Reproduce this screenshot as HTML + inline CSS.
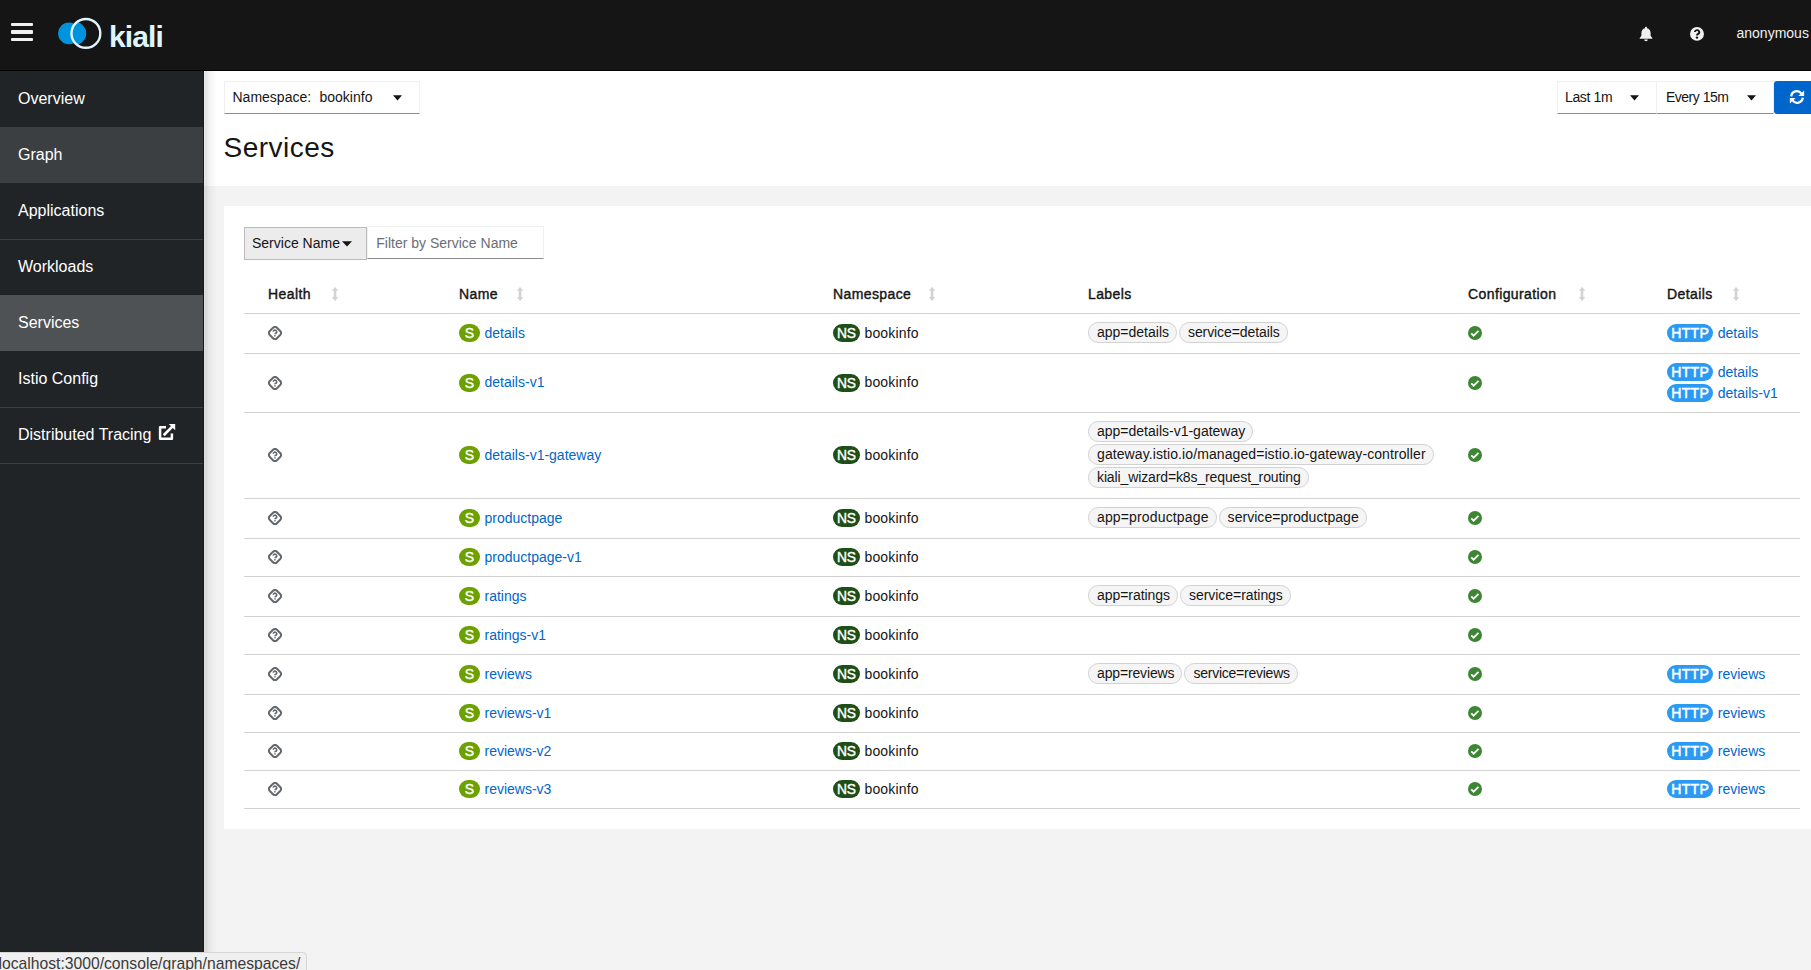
<!DOCTYPE html><html><head><meta charset="utf-8"><style>
*{margin:0;padding:0;box-sizing:border-box}
html,body{width:1811px;height:970px;overflow:hidden;background:#f3f3f3;font-family:"Liberation Sans", sans-serif;}
.a{position:absolute;white-space:nowrap}
</style></head><body><div class="a" style="left:0;top:0;width:1811px;height:70px;background:#151515"></div>
<div class="a" style="left:0;top:70px;width:1811px;height:1px;background:#030303"></div>
<div class="a" style="left:11px;top:22.8px;width:22px;height:3.4px;background:#f0f0f0;border-radius:1px"></div>
<div class="a" style="left:11px;top:30.3px;width:22px;height:3.4px;background:#f0f0f0;border-radius:1px"></div>
<div class="a" style="left:11px;top:37.8px;width:22px;height:3.4px;background:#f0f0f0;border-radius:1px"></div>
<svg class="a" style="left:50px;top:12px" width="60" height="44" viewBox="50 12 60 44">
<defs><clipPath id="ring"><circle cx="85.9" cy="33.4" r="14.3"/></clipPath></defs>
<circle cx="69" cy="33.4" r="10.9" fill="#0093dd"/>
<ellipse cx="72" cy="33.4" rx="14.2" ry="12.5" fill="#0093dd" clip-path="url(#ring)"/>
<circle cx="85.9" cy="33.4" r="14.4" fill="none" stroke="#dff6fc" stroke-width="2.4"/>
</svg>
<div class="a" style="left:109px;top:20.04px;font-size:30px;line-height:34.50px;color:#dff6fc;font-weight:bold;letter-spacing:-0.9px">kiali</div>
<svg class="a" style="left:1639px;top:26px" width="14" height="16" viewBox="0 0 14 16">
<path d="M7 0.8c0.6 0 1 0.4 1 0.9v0.5c2.3 0.5 3.6 2.4 3.6 4.8v2.8l1.7 2.1v0.9H0.7v-0.9l1.7-2.1V7c0-2.4 1.3-4.3 3.6-4.8V1.7c0-0.5 0.4-0.9 1-0.9z M5.2 13.6h3.6c0 1-0.8 1.6-1.8 1.6s-1.8-0.6-1.8-1.6z" fill="#f0f0f0"/>
</svg>
<svg class="a" style="left:1689px;top:26px" width="16" height="16" viewBox="0 0 16 16">
<circle cx="8" cy="7.9" r="6.95" fill="#f0f0f0"/>
<path d="M5.9 6.1A2.2 2.0 0 1 1 9.1 7.9Q8 8.6 8 9.6" fill="none" stroke="#151515" stroke-width="1.9"/>
<circle cx="8" cy="11.6" r="1.2" fill="#151515"/>
</svg>
<div class="a" style="left:1736.5px;top:25.12px;font-size:14px;line-height:16.10px;color:#f0f0f0;font-weight:normal;">anonymous</div>
<div class="a" style="left:0;top:71px;width:204px;height:899px;background:#212427"></div>
<div class="a" style="left:18px;top:89.51px;font-size:16px;line-height:18.40px;color:#ffffff;font-weight:normal;">Overview</div>
<div class="a" style="left:0;top:127px;width:203px;height:56px;background:#3c3f42"></div>
<div class="a" style="left:18px;top:145.51px;font-size:16px;line-height:18.40px;color:#ffffff;font-weight:normal;">Graph</div>
<div class="a" style="left:18px;top:201.51px;font-size:16px;line-height:18.40px;color:#ffffff;font-weight:normal;">Applications</div>
<div class="a" style="left:18px;top:257.51px;font-size:16px;line-height:18.40px;color:#ffffff;font-weight:normal;">Workloads</div>
<div class="a" style="left:0;top:295px;width:203px;height:56px;background:#4f5255"></div>
<div class="a" style="left:18px;top:313.51px;font-size:16px;line-height:18.40px;color:#ffffff;font-weight:normal;">Services</div>
<div class="a" style="left:18px;top:369.51px;font-size:16px;line-height:18.40px;color:#ffffff;font-weight:normal;">Istio Config</div>
<div class="a" style="left:18px;top:425.51px;font-size:16px;line-height:18.40px;color:#ffffff;font-weight:normal;">Distributed Tracing</div>
<div class="a" style="left:0;top:239px;width:203px;height:1px;background:#3c3f42"></div>
<div class="a" style="left:0;top:407px;width:203px;height:1px;background:#3c3f42"></div>
<div class="a" style="left:0;top:463px;width:203px;height:1px;background:#3c3f42"></div>
<div class="a" style="left:203px;top:71px;width:1px;height:899px;background:#17191c"></div>
<svg class="a" style="left:150px;top:415px" width="35" height="33" viewBox="0 0 35 33">
<path d="M16 12.15H10.1V23.8H21.9V18.5" fill="none" stroke="#fff" stroke-width="2.5" stroke-linejoin="round"/>
<path d="M18.8 9H25.2V15.3z" fill="#fff"/>
<path d="M13.7 20.2L22.3 11.6" stroke="#fff" stroke-width="2.7"/>
</svg>
<div class="a" style="left:204px;top:71px;width:1607px;height:115px;background:#fff"></div>
<div class="a" style="left:204px;top:71px;width:14px;height:899px;background:linear-gradient(to right,rgba(0,0,0,.07) 0px,rgba(0,0,0,.11) 1.5px,rgba(0,0,0,.09) 3px,rgba(0,0,0,.05) 5px,rgba(0,0,0,.02) 9px,rgba(0,0,0,0) 13px)"></div>
<div class="a" style="left:224px;top:81px;width:196px;height:33px;background:#fff;border:1px solid #f0f0f0;border-bottom-color:#8a8d90"></div><svg class="a" style="left:392.5px;top:95px" width="9" height="6" viewBox="0 0 9 6"><path d="M0 0.3h9L4.5 5.6z" fill="#151515"/></svg>
<div class="a" style="left:232.5px;top:89.12px;font-size:14px;line-height:16.10px;color:#151515;font-weight:normal;">Namespace:</div>
<div class="a" style="left:319.5px;top:89.12px;font-size:14px;line-height:16.10px;color:#151515;font-weight:normal;">bookinfo</div>
<div class="a" style="left:1557px;top:81px;width:100px;height:33px;background:#fff;border:1px solid #f0f0f0;border-bottom-color:#8a8d90"></div><svg class="a" style="left:1630px;top:95px" width="9" height="6" viewBox="0 0 9 6"><path d="M0 0.3h9L4.5 5.6z" fill="#151515"/></svg>
<div class="a" style="left:1565px;top:89.12px;font-size:14px;line-height:16.10px;color:#151515;font-weight:normal;letter-spacing:-0.35px">Last 1m</div>
<div class="a" style="left:1656px;top:81px;width:118px;height:33px;background:#fff;border:1px solid #f0f0f0;border-bottom-color:#8a8d90"></div><svg class="a" style="left:1746.5px;top:95px" width="9" height="6" viewBox="0 0 9 6"><path d="M0 0.3h9L4.5 5.6z" fill="#151515"/></svg>
<div class="a" style="left:1666px;top:89.12px;font-size:14px;line-height:16.10px;color:#151515;font-weight:normal;letter-spacing:-0.5px">Every 15m</div>
<div class="a" style="left:1774px;top:81px;width:50px;height:33px;background:#0066cc;border-radius:3px"></div>
<svg class="a" style="left:1780px;top:82px" width="31" height="30" viewBox="0 0 31 30">
<path d="M11.2 14.3A5.65 5.65 0 0 1 21.4 11.6" fill="none" stroke="#fff" stroke-width="2.3"/>
<path d="M18.4 13.9H24.1V8.6z" fill="#fff"/>
<path d="M22.8 15.7A5.65 5.65 0 0 1 12.6 18.4" fill="none" stroke="#fff" stroke-width="2.3"/>
<path d="M9.9 16.1H15.6L9.9 21.4z" fill="#fff"/>
</svg>
<div class="a" style="left:223.5px;top:131.95px;font-size:28px;line-height:32.20px;color:#151515;font-weight:normal;letter-spacing:0.5px">Services</div>
<div class="a" style="left:224px;top:206px;width:1600px;height:623px;background:#fff"></div>
<div class="a" style="left:244px;top:227px;width:123px;height:33px;background:#ececec;border:1px solid #bababa"></div>
<div class="a" style="left:252px;top:235.32px;font-size:14px;line-height:16.10px;color:#151515;font-weight:normal;">Service Name</div>
<svg class="a" style="left:341.5px;top:241px" width="10" height="6" viewBox="0 0 10 6"><path d="M0 0.3h10L5 5.6z" fill="#151515"/></svg>
<div class="a" style="left:367px;top:226px;width:177px;height:33px;background:#fff;border:1px solid #f0f0f0;border-bottom-color:#8a8d90"></div>
<div class="a" style="left:376.3px;top:235.32px;font-size:14px;line-height:16.10px;color:#6a6e73;font-weight:normal;">Filter by Service Name</div>
<div class="a" style="left:268px;top:286.12px;font-size:14px;line-height:16.10px;color:#151515;font-weight:normal;-webkit-text-stroke:0.4px #151515;letter-spacing:0.4px">Health</div>
<svg class="a" style="left:331.9px;top:286px" width="8" height="16" viewBox="0 0 8 16"><path d="M3.05 1.2L5.8 4.5H4.05V11.3H5.8L3.05 14.8 0.3 11.3H2.05V4.5H0.3z" fill="#d2d2d2" stroke="#d2d2d2" stroke-width="0.5" stroke-linejoin="round"/></svg>
<div class="a" style="left:459px;top:286.12px;font-size:14px;line-height:16.10px;color:#151515;font-weight:normal;-webkit-text-stroke:0.4px #151515;letter-spacing:0.4px">Name</div>
<svg class="a" style="left:517.1px;top:286px" width="8" height="16" viewBox="0 0 8 16"><path d="M3.05 1.2L5.8 4.5H4.05V11.3H5.8L3.05 14.8 0.3 11.3H2.05V4.5H0.3z" fill="#d2d2d2" stroke="#d2d2d2" stroke-width="0.5" stroke-linejoin="round"/></svg>
<div class="a" style="left:833px;top:286.12px;font-size:14px;line-height:16.10px;color:#151515;font-weight:normal;-webkit-text-stroke:0.4px #151515;letter-spacing:0.4px">Namespace</div>
<svg class="a" style="left:929.1px;top:286px" width="8" height="16" viewBox="0 0 8 16"><path d="M3.05 1.2L5.8 4.5H4.05V11.3H5.8L3.05 14.8 0.3 11.3H2.05V4.5H0.3z" fill="#d2d2d2" stroke="#d2d2d2" stroke-width="0.5" stroke-linejoin="round"/></svg>
<div class="a" style="left:1088px;top:286.12px;font-size:14px;line-height:16.10px;color:#151515;font-weight:normal;-webkit-text-stroke:0.4px #151515;letter-spacing:0.4px">Labels</div>
<div class="a" style="left:1468px;top:286.12px;font-size:14px;line-height:16.10px;color:#151515;font-weight:normal;-webkit-text-stroke:0.4px #151515;letter-spacing:0.4px">Configuration</div>
<svg class="a" style="left:1579.1000000000001px;top:286px" width="8" height="16" viewBox="0 0 8 16"><path d="M3.05 1.2L5.8 4.5H4.05V11.3H5.8L3.05 14.8 0.3 11.3H2.05V4.5H0.3z" fill="#d2d2d2" stroke="#d2d2d2" stroke-width="0.5" stroke-linejoin="round"/></svg>
<div class="a" style="left:1667px;top:286.12px;font-size:14px;line-height:16.10px;color:#151515;font-weight:normal;-webkit-text-stroke:0.4px #151515;letter-spacing:0.4px">Details</div>
<svg class="a" style="left:1733.1000000000001px;top:286px" width="8" height="16" viewBox="0 0 8 16"><path d="M3.05 1.2L5.8 4.5H4.05V11.3H5.8L3.05 14.8 0.3 11.3H2.05V4.5H0.3z" fill="#d2d2d2" stroke="#d2d2d2" stroke-width="0.5" stroke-linejoin="round"/></svg>
<div class="a" style="left:244px;top:313px;width:1556px;height:1px;background:#d2d2d2"></div>
<div class="a" style="left:244px;top:353px;width:1556px;height:1px;background:#d2d2d2"></div>
<svg class="a" style="left:268px;top:326.0px" width="14" height="14" viewBox="0 0 14 14">
<rect x="1.94" y="1.94" width="10.12" height="10.12" rx="2.8" transform="rotate(45 7 7)" fill="none" stroke="#64686d" stroke-width="2"/>
<path d="M5.3 5.8A1.7 1.7 0 1 1 8.3 6.9L7.5 7.5Q7 7.9 7 8.2" fill="none" stroke="#64686d" stroke-width="1.65"/>
<circle cx="7" cy="9.75" r="0.85" fill="#64686d"/>
</svg>
<div class="a" style="left:459px;top:324.0px;width:21px;height:18px;border-radius:9px;background:#6ca100;color:#fff;font-size:14px;font-weight:normal;-webkit-text-stroke:0.35px #fff;line-height:18.6px;text-align:center">S</div>
<div class="a" style="left:484.5px;top:324.92px;font-size:14px;line-height:16.10px;color:#0066cc;font-weight:normal;">details</div>
<div class="a" style="left:833px;top:324.0px;width:27px;height:18px;border-radius:9px;background:#1e4f18;color:#fff;font-size:13.8px;font-weight:normal;-webkit-text-stroke:0.4px #fff;line-height:19.2px;letter-spacing:-0.4px;text-indent:-0.4px;text-align:center">NS</div>
<div class="a" style="left:864.5px;top:324.92px;font-size:14px;line-height:16.10px;color:#151515;font-weight:normal;letter-spacing:0.15px">bookinfo</div>
<div class="a" style="left:1088px;top:322.4px;display:flex;gap:2px"><div style="height:20.6px;padding:0 7px 0 8px;border:1px solid #d2d2d2;border-radius:10.3px;background:#f5f5f5;font-size:14px;line-height:18.6px;color:#151515;white-space:nowrap;letter-spacing:0px">app=details</div><div style="height:20.6px;padding:0 7px 0 8px;border:1px solid #d2d2d2;border-radius:10.3px;background:#f5f5f5;font-size:14px;line-height:18.6px;color:#151515;white-space:nowrap;letter-spacing:-0.09px">service=details</div></div>
<svg class="a" style="left:1468px;top:326.0px" width="14" height="14" viewBox="0 0 14 14">
<circle cx="7" cy="7" r="7" fill="#3e8635"/>
<path d="M3.3 7.4L5.6 9.7L10.5 4.8" fill="none" stroke="#fff" stroke-width="1.75"/>
</svg>
<div class="a" style="left:1667px;top:323.7px;width:46px;height:18px;border-radius:9px;background:#2b9af3;color:#fff;font-size:14px;font-weight:normal;-webkit-text-stroke:0.5px #fff;line-height:18px;text-align:center;letter-spacing:0.3px;text-indent:0.3px">HTTP</div>
<div class="a" style="left:1717.8px;top:324.62px;font-size:14px;line-height:16.10px;color:#0066cc;font-weight:normal;">details</div>
<div class="a" style="left:244px;top:412px;width:1556px;height:1px;background:#d2d2d2"></div>
<svg class="a" style="left:268px;top:375.5px" width="14" height="14" viewBox="0 0 14 14">
<rect x="1.94" y="1.94" width="10.12" height="10.12" rx="2.8" transform="rotate(45 7 7)" fill="none" stroke="#64686d" stroke-width="2"/>
<path d="M5.3 5.8A1.7 1.7 0 1 1 8.3 6.9L7.5 7.5Q7 7.9 7 8.2" fill="none" stroke="#64686d" stroke-width="1.65"/>
<circle cx="7" cy="9.75" r="0.85" fill="#64686d"/>
</svg>
<div class="a" style="left:459px;top:373.5px;width:21px;height:18px;border-radius:9px;background:#6ca100;color:#fff;font-size:14px;font-weight:normal;-webkit-text-stroke:0.35px #fff;line-height:18.6px;text-align:center">S</div>
<div class="a" style="left:484.5px;top:374.42px;font-size:14px;line-height:16.10px;color:#0066cc;font-weight:normal;">details-v1</div>
<div class="a" style="left:833px;top:373.5px;width:27px;height:18px;border-radius:9px;background:#1e4f18;color:#fff;font-size:13.8px;font-weight:normal;-webkit-text-stroke:0.4px #fff;line-height:19.2px;letter-spacing:-0.4px;text-indent:-0.4px;text-align:center">NS</div>
<div class="a" style="left:864.5px;top:374.42px;font-size:14px;line-height:16.10px;color:#151515;font-weight:normal;letter-spacing:0.15px">bookinfo</div>
<svg class="a" style="left:1468px;top:375.5px" width="14" height="14" viewBox="0 0 14 14">
<circle cx="7" cy="7" r="7" fill="#3e8635"/>
<path d="M3.3 7.4L5.6 9.7L10.5 4.8" fill="none" stroke="#fff" stroke-width="1.75"/>
</svg>
<div class="a" style="left:1667px;top:362.7px;width:46px;height:18px;border-radius:9px;background:#2b9af3;color:#fff;font-size:14px;font-weight:normal;-webkit-text-stroke:0.5px #fff;line-height:18px;text-align:center;letter-spacing:0.3px;text-indent:0.3px">HTTP</div>
<div class="a" style="left:1717.8px;top:363.62px;font-size:14px;line-height:16.10px;color:#0066cc;font-weight:normal;">details</div>
<div class="a" style="left:1667px;top:383.7px;width:46px;height:18px;border-radius:9px;background:#2b9af3;color:#fff;font-size:14px;font-weight:normal;-webkit-text-stroke:0.5px #fff;line-height:18px;text-align:center;letter-spacing:0.3px;text-indent:0.3px">HTTP</div>
<div class="a" style="left:1717.8px;top:384.62px;font-size:14px;line-height:16.10px;color:#0066cc;font-weight:normal;">details-v1</div>
<div class="a" style="left:244px;top:498px;width:1556px;height:1px;background:#d2d2d2"></div>
<svg class="a" style="left:268px;top:448.0px" width="14" height="14" viewBox="0 0 14 14">
<rect x="1.94" y="1.94" width="10.12" height="10.12" rx="2.8" transform="rotate(45 7 7)" fill="none" stroke="#64686d" stroke-width="2"/>
<path d="M5.3 5.8A1.7 1.7 0 1 1 8.3 6.9L7.5 7.5Q7 7.9 7 8.2" fill="none" stroke="#64686d" stroke-width="1.65"/>
<circle cx="7" cy="9.75" r="0.85" fill="#64686d"/>
</svg>
<div class="a" style="left:459px;top:446.0px;width:21px;height:18px;border-radius:9px;background:#6ca100;color:#fff;font-size:14px;font-weight:normal;-webkit-text-stroke:0.35px #fff;line-height:18.6px;text-align:center">S</div>
<div class="a" style="left:484.5px;top:446.92px;font-size:14px;line-height:16.10px;color:#0066cc;font-weight:normal;">details-v1-gateway</div>
<div class="a" style="left:833px;top:446.0px;width:27px;height:18px;border-radius:9px;background:#1e4f18;color:#fff;font-size:13.8px;font-weight:normal;-webkit-text-stroke:0.4px #fff;line-height:19.2px;letter-spacing:-0.4px;text-indent:-0.4px;text-align:center">NS</div>
<div class="a" style="left:864.5px;top:446.92px;font-size:14px;line-height:16.10px;color:#151515;font-weight:normal;letter-spacing:0.15px">bookinfo</div>
<div class="a" style="left:1088px;top:421.4px;height:20.6px;padding:0 7px 0 8px;border:1px solid #d2d2d2;border-radius:10.3px;background:#f5f5f5;font-size:14px;line-height:18.6px;color:#151515;letter-spacing:0px">app=details-v1-gateway</div>
<div class="a" style="left:1088px;top:444.4px;height:20.6px;padding:0 7px 0 8px;border:1px solid #d2d2d2;border-radius:10.3px;background:#f5f5f5;font-size:14px;line-height:18.6px;color:#151515;letter-spacing:0.092px">gateway.istio.io/managed=istio.io-gateway-controller</div>
<div class="a" style="left:1088px;top:467.4px;height:20.6px;padding:0 7px 0 8px;border:1px solid #d2d2d2;border-radius:10.3px;background:#f5f5f5;font-size:14px;line-height:18.6px;color:#151515;letter-spacing:-0.12px">kiali_wizard=k8s_request_routing</div>
<svg class="a" style="left:1468px;top:448.0px" width="14" height="14" viewBox="0 0 14 14">
<circle cx="7" cy="7" r="7" fill="#3e8635"/>
<path d="M3.3 7.4L5.6 9.7L10.5 4.8" fill="none" stroke="#fff" stroke-width="1.75"/>
</svg>
<div class="a" style="left:244px;top:538px;width:1556px;height:1px;background:#d2d2d2"></div>
<svg class="a" style="left:268px;top:511.0px" width="14" height="14" viewBox="0 0 14 14">
<rect x="1.94" y="1.94" width="10.12" height="10.12" rx="2.8" transform="rotate(45 7 7)" fill="none" stroke="#64686d" stroke-width="2"/>
<path d="M5.3 5.8A1.7 1.7 0 1 1 8.3 6.9L7.5 7.5Q7 7.9 7 8.2" fill="none" stroke="#64686d" stroke-width="1.65"/>
<circle cx="7" cy="9.75" r="0.85" fill="#64686d"/>
</svg>
<div class="a" style="left:459px;top:509.0px;width:21px;height:18px;border-radius:9px;background:#6ca100;color:#fff;font-size:14px;font-weight:normal;-webkit-text-stroke:0.35px #fff;line-height:18.6px;text-align:center">S</div>
<div class="a" style="left:484.5px;top:509.92px;font-size:14px;line-height:16.10px;color:#0066cc;font-weight:normal;">productpage</div>
<div class="a" style="left:833px;top:509.0px;width:27px;height:18px;border-radius:9px;background:#1e4f18;color:#fff;font-size:13.8px;font-weight:normal;-webkit-text-stroke:0.4px #fff;line-height:19.2px;letter-spacing:-0.4px;text-indent:-0.4px;text-align:center">NS</div>
<div class="a" style="left:864.5px;top:509.92px;font-size:14px;line-height:16.10px;color:#151515;font-weight:normal;letter-spacing:0.15px">bookinfo</div>
<div class="a" style="left:1088px;top:507.4px;display:flex;gap:2px"><div style="height:20.6px;padding:0 7px 0 8px;border:1px solid #d2d2d2;border-radius:10.3px;background:#f5f5f5;font-size:14px;line-height:18.6px;color:#151515;white-space:nowrap;letter-spacing:0.147px">app=productpage</div><div style="height:20.6px;padding:0 7px 0 8px;border:1px solid #d2d2d2;border-radius:10.3px;background:#f5f5f5;font-size:14px;line-height:18.6px;color:#151515;white-space:nowrap;letter-spacing:0.04px">service=productpage</div></div>
<svg class="a" style="left:1468px;top:511.0px" width="14" height="14" viewBox="0 0 14 14">
<circle cx="7" cy="7" r="7" fill="#3e8635"/>
<path d="M3.3 7.4L5.6 9.7L10.5 4.8" fill="none" stroke="#fff" stroke-width="1.75"/>
</svg>
<div class="a" style="left:244px;top:576px;width:1556px;height:1px;background:#d2d2d2"></div>
<svg class="a" style="left:268px;top:550.0px" width="14" height="14" viewBox="0 0 14 14">
<rect x="1.94" y="1.94" width="10.12" height="10.12" rx="2.8" transform="rotate(45 7 7)" fill="none" stroke="#64686d" stroke-width="2"/>
<path d="M5.3 5.8A1.7 1.7 0 1 1 8.3 6.9L7.5 7.5Q7 7.9 7 8.2" fill="none" stroke="#64686d" stroke-width="1.65"/>
<circle cx="7" cy="9.75" r="0.85" fill="#64686d"/>
</svg>
<div class="a" style="left:459px;top:548.0px;width:21px;height:18px;border-radius:9px;background:#6ca100;color:#fff;font-size:14px;font-weight:normal;-webkit-text-stroke:0.35px #fff;line-height:18.6px;text-align:center">S</div>
<div class="a" style="left:484.5px;top:548.92px;font-size:14px;line-height:16.10px;color:#0066cc;font-weight:normal;">productpage-v1</div>
<div class="a" style="left:833px;top:548.0px;width:27px;height:18px;border-radius:9px;background:#1e4f18;color:#fff;font-size:13.8px;font-weight:normal;-webkit-text-stroke:0.4px #fff;line-height:19.2px;letter-spacing:-0.4px;text-indent:-0.4px;text-align:center">NS</div>
<div class="a" style="left:864.5px;top:548.92px;font-size:14px;line-height:16.10px;color:#151515;font-weight:normal;letter-spacing:0.15px">bookinfo</div>
<svg class="a" style="left:1468px;top:550.0px" width="14" height="14" viewBox="0 0 14 14">
<circle cx="7" cy="7" r="7" fill="#3e8635"/>
<path d="M3.3 7.4L5.6 9.7L10.5 4.8" fill="none" stroke="#fff" stroke-width="1.75"/>
</svg>
<div class="a" style="left:244px;top:616px;width:1556px;height:1px;background:#d2d2d2"></div>
<svg class="a" style="left:268px;top:589.0px" width="14" height="14" viewBox="0 0 14 14">
<rect x="1.94" y="1.94" width="10.12" height="10.12" rx="2.8" transform="rotate(45 7 7)" fill="none" stroke="#64686d" stroke-width="2"/>
<path d="M5.3 5.8A1.7 1.7 0 1 1 8.3 6.9L7.5 7.5Q7 7.9 7 8.2" fill="none" stroke="#64686d" stroke-width="1.65"/>
<circle cx="7" cy="9.75" r="0.85" fill="#64686d"/>
</svg>
<div class="a" style="left:459px;top:587.0px;width:21px;height:18px;border-radius:9px;background:#6ca100;color:#fff;font-size:14px;font-weight:normal;-webkit-text-stroke:0.35px #fff;line-height:18.6px;text-align:center">S</div>
<div class="a" style="left:484.5px;top:587.92px;font-size:14px;line-height:16.10px;color:#0066cc;font-weight:normal;">ratings</div>
<div class="a" style="left:833px;top:587.0px;width:27px;height:18px;border-radius:9px;background:#1e4f18;color:#fff;font-size:13.8px;font-weight:normal;-webkit-text-stroke:0.4px #fff;line-height:19.2px;letter-spacing:-0.4px;text-indent:-0.4px;text-align:center">NS</div>
<div class="a" style="left:864.5px;top:587.92px;font-size:14px;line-height:16.10px;color:#151515;font-weight:normal;letter-spacing:0.15px">bookinfo</div>
<div class="a" style="left:1088px;top:585.4px;display:flex;gap:2px"><div style="height:20.6px;padding:0 7px 0 8px;border:1px solid #d2d2d2;border-radius:10.3px;background:#f5f5f5;font-size:14px;line-height:18.6px;color:#151515;white-space:nowrap;letter-spacing:-0.05px">app=ratings</div><div style="height:20.6px;padding:0 7px 0 8px;border:1px solid #d2d2d2;border-radius:10.3px;background:#f5f5f5;font-size:14px;line-height:18.6px;color:#151515;white-space:nowrap;letter-spacing:-0.05px">service=ratings</div></div>
<svg class="a" style="left:1468px;top:589.0px" width="14" height="14" viewBox="0 0 14 14">
<circle cx="7" cy="7" r="7" fill="#3e8635"/>
<path d="M3.3 7.4L5.6 9.7L10.5 4.8" fill="none" stroke="#fff" stroke-width="1.75"/>
</svg>
<div class="a" style="left:244px;top:654px;width:1556px;height:1px;background:#d2d2d2"></div>
<svg class="a" style="left:268px;top:628.0px" width="14" height="14" viewBox="0 0 14 14">
<rect x="1.94" y="1.94" width="10.12" height="10.12" rx="2.8" transform="rotate(45 7 7)" fill="none" stroke="#64686d" stroke-width="2"/>
<path d="M5.3 5.8A1.7 1.7 0 1 1 8.3 6.9L7.5 7.5Q7 7.9 7 8.2" fill="none" stroke="#64686d" stroke-width="1.65"/>
<circle cx="7" cy="9.75" r="0.85" fill="#64686d"/>
</svg>
<div class="a" style="left:459px;top:626.0px;width:21px;height:18px;border-radius:9px;background:#6ca100;color:#fff;font-size:14px;font-weight:normal;-webkit-text-stroke:0.35px #fff;line-height:18.6px;text-align:center">S</div>
<div class="a" style="left:484.5px;top:626.92px;font-size:14px;line-height:16.10px;color:#0066cc;font-weight:normal;">ratings-v1</div>
<div class="a" style="left:833px;top:626.0px;width:27px;height:18px;border-radius:9px;background:#1e4f18;color:#fff;font-size:13.8px;font-weight:normal;-webkit-text-stroke:0.4px #fff;line-height:19.2px;letter-spacing:-0.4px;text-indent:-0.4px;text-align:center">NS</div>
<div class="a" style="left:864.5px;top:626.92px;font-size:14px;line-height:16.10px;color:#151515;font-weight:normal;letter-spacing:0.15px">bookinfo</div>
<svg class="a" style="left:1468px;top:628.0px" width="14" height="14" viewBox="0 0 14 14">
<circle cx="7" cy="7" r="7" fill="#3e8635"/>
<path d="M3.3 7.4L5.6 9.7L10.5 4.8" fill="none" stroke="#fff" stroke-width="1.75"/>
</svg>
<div class="a" style="left:244px;top:694px;width:1556px;height:1px;background:#d2d2d2"></div>
<svg class="a" style="left:268px;top:667.0px" width="14" height="14" viewBox="0 0 14 14">
<rect x="1.94" y="1.94" width="10.12" height="10.12" rx="2.8" transform="rotate(45 7 7)" fill="none" stroke="#64686d" stroke-width="2"/>
<path d="M5.3 5.8A1.7 1.7 0 1 1 8.3 6.9L7.5 7.5Q7 7.9 7 8.2" fill="none" stroke="#64686d" stroke-width="1.65"/>
<circle cx="7" cy="9.75" r="0.85" fill="#64686d"/>
</svg>
<div class="a" style="left:459px;top:665.0px;width:21px;height:18px;border-radius:9px;background:#6ca100;color:#fff;font-size:14px;font-weight:normal;-webkit-text-stroke:0.35px #fff;line-height:18.6px;text-align:center">S</div>
<div class="a" style="left:484.5px;top:665.92px;font-size:14px;line-height:16.10px;color:#0066cc;font-weight:normal;">reviews</div>
<div class="a" style="left:833px;top:665.0px;width:27px;height:18px;border-radius:9px;background:#1e4f18;color:#fff;font-size:13.8px;font-weight:normal;-webkit-text-stroke:0.4px #fff;line-height:19.2px;letter-spacing:-0.4px;text-indent:-0.4px;text-align:center">NS</div>
<div class="a" style="left:864.5px;top:665.92px;font-size:14px;line-height:16.10px;color:#151515;font-weight:normal;letter-spacing:0.15px">bookinfo</div>
<div class="a" style="left:1088px;top:663.4px;display:flex;gap:2px"><div style="height:20.6px;padding:0 7px 0 8px;border:1px solid #d2d2d2;border-radius:10.3px;background:#f5f5f5;font-size:14px;line-height:18.6px;color:#151515;white-space:nowrap;letter-spacing:-0.145px">app=reviews</div><div style="height:20.6px;padding:0 7px 0 8px;border:1px solid #d2d2d2;border-radius:10.3px;background:#f5f5f5;font-size:14px;line-height:18.6px;color:#151515;white-space:nowrap;letter-spacing:-0.24px">service=reviews</div></div>
<svg class="a" style="left:1468px;top:667.0px" width="14" height="14" viewBox="0 0 14 14">
<circle cx="7" cy="7" r="7" fill="#3e8635"/>
<path d="M3.3 7.4L5.6 9.7L10.5 4.8" fill="none" stroke="#fff" stroke-width="1.75"/>
</svg>
<div class="a" style="left:1667px;top:664.7px;width:46px;height:18px;border-radius:9px;background:#2b9af3;color:#fff;font-size:14px;font-weight:normal;-webkit-text-stroke:0.5px #fff;line-height:18px;text-align:center;letter-spacing:0.3px;text-indent:0.3px">HTTP</div>
<div class="a" style="left:1717.8px;top:665.62px;font-size:14px;line-height:16.10px;color:#0066cc;font-weight:normal;">reviews</div>
<div class="a" style="left:244px;top:732px;width:1556px;height:1px;background:#d2d2d2"></div>
<svg class="a" style="left:268px;top:706.0px" width="14" height="14" viewBox="0 0 14 14">
<rect x="1.94" y="1.94" width="10.12" height="10.12" rx="2.8" transform="rotate(45 7 7)" fill="none" stroke="#64686d" stroke-width="2"/>
<path d="M5.3 5.8A1.7 1.7 0 1 1 8.3 6.9L7.5 7.5Q7 7.9 7 8.2" fill="none" stroke="#64686d" stroke-width="1.65"/>
<circle cx="7" cy="9.75" r="0.85" fill="#64686d"/>
</svg>
<div class="a" style="left:459px;top:704.0px;width:21px;height:18px;border-radius:9px;background:#6ca100;color:#fff;font-size:14px;font-weight:normal;-webkit-text-stroke:0.35px #fff;line-height:18.6px;text-align:center">S</div>
<div class="a" style="left:484.5px;top:704.92px;font-size:14px;line-height:16.10px;color:#0066cc;font-weight:normal;">reviews-v1</div>
<div class="a" style="left:833px;top:704.0px;width:27px;height:18px;border-radius:9px;background:#1e4f18;color:#fff;font-size:13.8px;font-weight:normal;-webkit-text-stroke:0.4px #fff;line-height:19.2px;letter-spacing:-0.4px;text-indent:-0.4px;text-align:center">NS</div>
<div class="a" style="left:864.5px;top:704.92px;font-size:14px;line-height:16.10px;color:#151515;font-weight:normal;letter-spacing:0.15px">bookinfo</div>
<svg class="a" style="left:1468px;top:706.0px" width="14" height="14" viewBox="0 0 14 14">
<circle cx="7" cy="7" r="7" fill="#3e8635"/>
<path d="M3.3 7.4L5.6 9.7L10.5 4.8" fill="none" stroke="#fff" stroke-width="1.75"/>
</svg>
<div class="a" style="left:1667px;top:703.7px;width:46px;height:18px;border-radius:9px;background:#2b9af3;color:#fff;font-size:14px;font-weight:normal;-webkit-text-stroke:0.5px #fff;line-height:18px;text-align:center;letter-spacing:0.3px;text-indent:0.3px">HTTP</div>
<div class="a" style="left:1717.8px;top:704.62px;font-size:14px;line-height:16.10px;color:#0066cc;font-weight:normal;">reviews</div>
<div class="a" style="left:244px;top:770px;width:1556px;height:1px;background:#d2d2d2"></div>
<svg class="a" style="left:268px;top:744.0px" width="14" height="14" viewBox="0 0 14 14">
<rect x="1.94" y="1.94" width="10.12" height="10.12" rx="2.8" transform="rotate(45 7 7)" fill="none" stroke="#64686d" stroke-width="2"/>
<path d="M5.3 5.8A1.7 1.7 0 1 1 8.3 6.9L7.5 7.5Q7 7.9 7 8.2" fill="none" stroke="#64686d" stroke-width="1.65"/>
<circle cx="7" cy="9.75" r="0.85" fill="#64686d"/>
</svg>
<div class="a" style="left:459px;top:742.0px;width:21px;height:18px;border-radius:9px;background:#6ca100;color:#fff;font-size:14px;font-weight:normal;-webkit-text-stroke:0.35px #fff;line-height:18.6px;text-align:center">S</div>
<div class="a" style="left:484.5px;top:742.92px;font-size:14px;line-height:16.10px;color:#0066cc;font-weight:normal;">reviews-v2</div>
<div class="a" style="left:833px;top:742.0px;width:27px;height:18px;border-radius:9px;background:#1e4f18;color:#fff;font-size:13.8px;font-weight:normal;-webkit-text-stroke:0.4px #fff;line-height:19.2px;letter-spacing:-0.4px;text-indent:-0.4px;text-align:center">NS</div>
<div class="a" style="left:864.5px;top:742.92px;font-size:14px;line-height:16.10px;color:#151515;font-weight:normal;letter-spacing:0.15px">bookinfo</div>
<svg class="a" style="left:1468px;top:744.0px" width="14" height="14" viewBox="0 0 14 14">
<circle cx="7" cy="7" r="7" fill="#3e8635"/>
<path d="M3.3 7.4L5.6 9.7L10.5 4.8" fill="none" stroke="#fff" stroke-width="1.75"/>
</svg>
<div class="a" style="left:1667px;top:741.7px;width:46px;height:18px;border-radius:9px;background:#2b9af3;color:#fff;font-size:14px;font-weight:normal;-webkit-text-stroke:0.5px #fff;line-height:18px;text-align:center;letter-spacing:0.3px;text-indent:0.3px">HTTP</div>
<div class="a" style="left:1717.8px;top:742.62px;font-size:14px;line-height:16.10px;color:#0066cc;font-weight:normal;">reviews</div>
<div class="a" style="left:244px;top:808px;width:1556px;height:1px;background:#d2d2d2"></div>
<svg class="a" style="left:268px;top:782.0px" width="14" height="14" viewBox="0 0 14 14">
<rect x="1.94" y="1.94" width="10.12" height="10.12" rx="2.8" transform="rotate(45 7 7)" fill="none" stroke="#64686d" stroke-width="2"/>
<path d="M5.3 5.8A1.7 1.7 0 1 1 8.3 6.9L7.5 7.5Q7 7.9 7 8.2" fill="none" stroke="#64686d" stroke-width="1.65"/>
<circle cx="7" cy="9.75" r="0.85" fill="#64686d"/>
</svg>
<div class="a" style="left:459px;top:780.0px;width:21px;height:18px;border-radius:9px;background:#6ca100;color:#fff;font-size:14px;font-weight:normal;-webkit-text-stroke:0.35px #fff;line-height:18.6px;text-align:center">S</div>
<div class="a" style="left:484.5px;top:780.92px;font-size:14px;line-height:16.10px;color:#0066cc;font-weight:normal;">reviews-v3</div>
<div class="a" style="left:833px;top:780.0px;width:27px;height:18px;border-radius:9px;background:#1e4f18;color:#fff;font-size:13.8px;font-weight:normal;-webkit-text-stroke:0.4px #fff;line-height:19.2px;letter-spacing:-0.4px;text-indent:-0.4px;text-align:center">NS</div>
<div class="a" style="left:864.5px;top:780.92px;font-size:14px;line-height:16.10px;color:#151515;font-weight:normal;letter-spacing:0.15px">bookinfo</div>
<svg class="a" style="left:1468px;top:782.0px" width="14" height="14" viewBox="0 0 14 14">
<circle cx="7" cy="7" r="7" fill="#3e8635"/>
<path d="M3.3 7.4L5.6 9.7L10.5 4.8" fill="none" stroke="#fff" stroke-width="1.75"/>
</svg>
<div class="a" style="left:1667px;top:779.7px;width:46px;height:18px;border-radius:9px;background:#2b9af3;color:#fff;font-size:14px;font-weight:normal;-webkit-text-stroke:0.5px #fff;line-height:18px;text-align:center;letter-spacing:0.3px;text-indent:0.3px">HTTP</div>
<div class="a" style="left:1717.8px;top:780.62px;font-size:14px;line-height:16.10px;color:#0066cc;font-weight:normal;">reviews</div>
<div class="a" style="left:-1px;top:952px;width:308px;height:20px;background:#f0f0f0;border:1px solid #d6d6d6;border-top-right-radius:4px"></div>
<div class="a" style="left:-1.5px;top:954.58px;font-size:15.7px;line-height:18.05px;color:#3a3a3a;font-weight:normal;">localhost:3000/console/graph/namespaces/</div></body></html>
